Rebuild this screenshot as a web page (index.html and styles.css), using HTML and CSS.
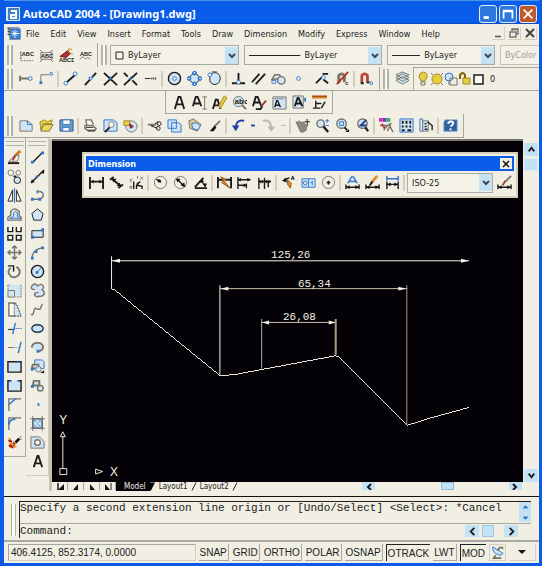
FILE: index.html
```html
<!DOCTYPE html>
<html lang="en">
<head>
<meta charset="utf-8">
<title>AutoCAD 2004 - [Drawing1.dwg]</title>
<link rel="stylesheet" href="styles.css">
</head>
<body>
<div class="window">
<header class="titlebar">
  <svg class="logo" viewBox="0 0 14 14"><rect width="14" height="14" fill="#dfe6ea"/><rect x="2" y="1" width="11" height="12" fill="#3f83c4"/><path d="M5 4h5v7H5V8h5" fill="none" stroke="#fff" stroke-width="2"/></svg>
  <h1>AutoCAD 2004 - [Drawing1.dwg]</h1>
  <div class="winbtns">
    <button aria-label="Minimize"><svg viewBox="0 0 16 16"><path d="M3 12h6" stroke="#fff" stroke-width="3"/></svg></button>
    <button aria-label="Maximize"><svg viewBox="0 0 16 16"><path d="M3 13V4h10v9M3 5h10" fill="none" stroke="#fff" stroke-width="2"/></svg></button>
    <button class="close" aria-label="Close"><svg viewBox="0 0 16 16"><path d="M3 3l10 10M13 3L3 13" stroke="#fff" stroke-width="2"/></svg></button>
  </div>
</header>

<nav class="menubar">
  <svg class="doc" viewBox="0 0 14 14"><path d="M0 0h12l2 2v12H2z" fill="#8a98a4"/><rect x="3" y="2" width="11" height="11" fill="#2f78d4"/><path d="M8 3v9M4 7h9M5 4l6 6M11 4l-6 6" stroke="#fff"/><path d="M0 2h3M0 5h3M0 8h3" stroke="#333"/></svg>
  <button>File</button><button>Edit</button><button>View</button><button>Insert</button><button>Format</button><button>Tools</button><button>Draw</button><button>Dimension</button><button>Modify</button><button>Express</button><button>Window</button><button>Help</button>
  <div class="docbtns">
    <button aria-label="Minimize drawing"><svg viewBox="0 0 10 10"><path d="M2 8.500h6" stroke="#555" stroke-width="1.500"/></svg></button>
    <button aria-label="Restore drawing"><svg viewBox="0 0 10 10"><path d="M3 3V1h6v5H7M1 4h6v5H1zM3 1.500h6" fill="none" stroke="#777" stroke-width="1.500"/></svg></button>
    <button aria-label="Close drawing"><svg viewBox="0 0 10 10"><path d="M1 1l8 8M9 1L1 9" stroke="#444" stroke-width="2"/></svg></button>
  </div>
</nav>

<div class="bar">
  <div class="group">
    <span class="grip"></span>
    <button aria-label="Arc aligned text"><svg viewBox="0 0 16 16"><text x="3" y="8" class="tiny">ABC</text><path d="M2 4v9" stroke-dasharray="2 1"/><path d="M2 13.500h13" class="g" stroke-dasharray="2 1"/></svg></button>
    <button aria-label="Text mask"><svg viewBox="0 0 16 16"><path d="M2 5h12v7H2zM1 2l3 3M15 2l-4 3M1 15l3-3M15 15l-3-3" class="g"/><text x="2" y="11" class="tiny">ABC</text></svg></button>
    <button aria-label="Explode text"><svg viewBox="0 0 16 16"><text x="0" y="15" class="tiny">ABCD</text><path d="M1 9l8-6 3 3-4 4z" class="r"/><path d="M9 3l5-2M11 5l4 2M10 2l1-2" stroke="#d08020"/></svg></button>
    <button aria-label="Enclose text"><svg viewBox="0 0 16 16"><text x="1" y="9" class="tiny">ABC</text><path d="M1 12l3-3 3 3 2-2 3 2" class="g"/></svg></button>
  </div>
  <span class="grip lead"></span>
  <div class="combos">
    <label class="combo"><svg viewBox="0 0 9 9"><path d="M1 1h7v7H1z" fill="none" stroke="#222"/></svg><select aria-label="Color"><option>ByLayer</option></select></label>
    <label class="combo wide"><svg class="rule" viewBox="0 0 30 9" preserveAspectRatio="none"><path d="M0 4.500h30" stroke="#222"/></svg><select aria-label="Linetype"><option>ByLayer</option></select></label>
    <label class="combo"><svg class="rule" viewBox="0 0 30 9" preserveAspectRatio="none"><path d="M0 4.500h30" stroke="#222"/></svg><select aria-label="Lineweight"><option>ByLayer</option></select></label>
    <label class="combo off"><select aria-label="Plot style" disabled><option>ByColor</option></select></label>
  </div>
</div>

<div class="bar ruled">
  <div class="group">
    <span class="grip"></span>
    <button aria-label="Temporary track point"><svg viewBox="0 0 16 16"><path d="M1 5v6M1 8h9" class="g" stroke-width="2"/><circle cx="12" cy="8" r="2" class="b"/></svg></button>
    <button aria-label="Snap from"><svg viewBox="0 0 16 16"><path d="M2 13V4h9" class="g"/><circle cx="13" cy="3" r="1.500" class="b"/><path d="M2 11v3" stroke-width="3" class="b"/></svg></button>
    <i class="sep"></i>
    <button aria-label="Endpoint"><svg viewBox="0 0 16 16"><path d="M4 12l9-8" stroke-width="2"/><circle cx="3" cy="13" r="2" class="b t"/><circle cx="13" cy="3" r="2" class="b t"/></svg></button>
    <button aria-label="Midpoint"><svg viewBox="0 0 16 16"><path d="M2 15L14 2" stroke-width="2"/><path d="M6 7l5-1-3 4z" class="b t"/></svg></button>
    <button aria-label="Intersection"><svg viewBox="0 0 16 16"><path d="M1 2l14 13M15 2L1 15" stroke-width="2"/><path d="M6 8h4M8 6v4" class="b"/></svg></button>
    <button aria-label="Apparent intersection"><svg viewBox="0 0 16 16"><path d="M1 2l4 4M10 10l5 5M15 2L1 15" stroke-width="2"/><path d="M6 8h4M8 6v4" class="b"/></svg></button>
    <button aria-label="Extension"><svg viewBox="0 0 16 16"><path d="M2 8h6"/><path d="M9 8h6" stroke-dasharray="1 1" stroke-width="2"/></svg></button>
    <i class="sep"></i>
    <button aria-label="Center"><svg viewBox="0 0 16 16"><circle cx="8" cy="8" r="6.500" class="p" stroke-width="1.500"/><circle cx="8" cy="8" r="2" class="b t"/></svg></button>
    <button aria-label="Quadrant"><svg viewBox="0 0 16 16"><circle cx="8" cy="8" r="5" class="p"/><path d="M8 0l2 2-2 2-2-2zM8 12l2 2-2 2-2-2zM0 8l2-2 2 2-2 2zM12 8l2-2 2 2-2 2z" class="b t" stroke-width="1.500"/></svg></button>
    <button aria-label="Tangent"><svg viewBox="0 0 16 16"><path d="M3 4c6-5 12-1 11 5-1 7-10 7-11 1z" class="p"/><circle cx="3" cy="4" r="2" class="b t"/><path d="M5 1l6-1" class="g"/></svg></button>
    <i class="sep"></i>
    <button aria-label="Perpendicular"><svg viewBox="0 0 16 16"><path d="M8 2v8M1 13h14" stroke-width="2"/><circle cx="8" cy="12" r="2" class="b t"/></svg></button>
    <button aria-label="Parallel"><svg viewBox="0 0 16 16"><path d="M1 12L9 3M5 14L15 3" stroke-width="2"/></svg></button>
    <button aria-label="Insert point"><svg viewBox="0 0 16 16"><path d="M1 9l3-5h5l3 4z" class="p g" stroke-width="1.500"/><circle cx="11" cy="10" r="4" class="p g" stroke-width="1.500"/><path d="M1 10h4v3H1z" class="b t"/></svg></button>
    <button aria-label="Node"><svg viewBox="0 0 16 16"><circle cx="8" cy="8" r="2" class="b t"/></svg></button>
    <i class="sep blank"></i>
    <button aria-label="Nearest"><svg viewBox="0 0 16 16"><path d="M1 13l7-7M9 9l5 4M8 3h6" stroke-width="2"/><circle cx="9" cy="7" r="2" class="b t"/></svg></button>
    <button aria-label="No snap"><svg viewBox="0 0 16 16"><path d="M4 13V5q3-4 6 0v7" stroke-width="3" class="g"/><path d="M14 1L2 14" stroke="#b3332a" stroke-width="2"/><text x="11" y="15" class="tiny">c</text></svg></button>
    <i class="sep"></i>
    <button aria-label="Object snap settings"><svg viewBox="0 0 16 16"><path d="M3 13V5q3-4 6 0v6" stroke="#b8473c" stroke-width="3"/><path d="M2 13h3M8 12h3" stroke-width="2"/><circle cx="13" cy="13" r="1.500" class="b"/></svg></button>
  </div>
  <span class="grip lead"></span>
  <button aria-label="Layer properties"><svg viewBox="0 0 16 16"><path d="M1 10l7 4 7-4-7-4zM1 7l7 4 7-4-7-4zM1 4l7 4 7-4-7-3z" class="g p"/></svg></button>
  <div class="layer">
    <svg viewBox="0 0 14 16"><path d="M7 1q5 1 4 5l-2 4H5L3 6q0-4 4-5z" class="y"/><path d="M5 11h4v3H5z" class="g"/></svg>
    <svg viewBox="0 0 14 16"><circle cx="7" cy="8" r="5" class="y"/><path d="M1 2l2 2M13 2l-2 2M1 14l2-2M13 14l-2-2" class="g"/></svg>
    <svg viewBox="0 0 14 16"><circle cx="5" cy="6" r="4" class="b p"/><path d="M6 7h7v7H6z" class="g"/><path d="M5 10v4" class="g"/></svg>
    <svg viewBox="0 0 14 16"><path d="M2 8V4q3-4 5 0v3" stroke="#806000" stroke-width="2"/><path d="M5 7h7v6H5z" class="y"/></svg>
    <svg viewBox="0 0 14 16"><path d="M2 4h9v9H2z" class="t" stroke-width="1.500"/></svg>
    <select aria-label="Layer"><option>0</option></select>
  </div>
</div>

<div class="bar textbar">
  <div class="group boxed">
    <button aria-label="Multiline text"><svg viewBox="0 0 16 16"><path d="M3 15L7 2h2l4 13M4 10h8" stroke-width="2"/></svg></button>
    <button aria-label="Single line text"><svg viewBox="0 0 16 16"><path d="M1 12L4 2h2l4 10M2 9h6" stroke-width="2"/><path d="M11 2h5M13.500 2v13M11 15h5" class="g"/></svg></button>
    <button aria-label="Edit text"><svg viewBox="0 0 16 16"><path d="M1 15L4 5h2l3 10M2 11h6" stroke-width="2"/><path d="M7 12l6-11 3 2-7 11z" class="y"/></svg></button>
    <button aria-label="Find and replace"><svg viewBox="0 0 16 16"><circle cx="7" cy="7" r="5.500" class="p g"/><text x="3" y="10" class="abc">ab</text><text x="13" y="10" class="abc">c</text><path d="M11 11l4 4" class="g" stroke-width="2"/></svg></button>
    <button aria-label="Text style"><svg viewBox="0 0 16 16"><path d="M1 12L4 2h2l4 10M2 8h6" stroke-width="2"/><path d="M15 6l-5 6" stroke="#a43a24" stroke-width="2"/><path d="M4 15h5l2-3" stroke-width="2"/></svg></button>
    <button aria-label="Scale text"><svg viewBox="0 0 16 16"><path d="M1 2h14v13H1z" class="p g"/><path d="M3 4h10" stroke-dasharray="1 1"/><path d="M3 13l2-7h1l3 7M3 11h5" stroke-width="1.500"/></svg></button>
    <button aria-label="Justify text"><svg viewBox="0 0 16 16"><path d="M1 1h11v13H1z" class="p g"/><path d="M3 12L6 3h1l4 9M4 9h6" stroke-width="2"/><path d="M14 3v4" class="b" stroke-width="2"/></svg></button>
    <button aria-label="Convert distance"><svg viewBox="0 0 16 16"><path d="M0 2h16" stroke="#b04a18" stroke-width="3"/><path d="M0 3h16" stroke="#e0b030" stroke-dasharray="2 1" stroke-width="2"/><path d="M4 6v8M1 14h8M4 9h6M10 14l4-7" stroke-width="1.500"/></svg></button>
  </div>
</div>

<div class="bar">
  <div class="group standard">
    <span class="grip"></span>
    <button aria-label="New"><svg viewBox="0 0 16 16"><path d="M1 3h8l5 4v7H1z" class="p g"/><path d="M9 3v4h5" class="b"/></svg></button>
    <button aria-label="Open"><svg viewBox="0 0 16 16"><path d="M1 4l5-2 3 2 5-2-1 4H5L2 13z" class="y"/><path d="M5 7h10l-4 7H2z" fill="#f0d850" class="g"/></svg></button>
    <button aria-label="Save"><svg viewBox="0 0 16 16"><path d="M1 2h14v12H1z" fill="#6f9cc8" stroke="#31588a"/><path d="M4 2h8v5H4zM4 10h7v4H4z" class="t b"/></svg></button>
    <i class="sep"></i>
    <button aria-label="Plot"><svg viewBox="0 0 16 16"><path d="M4 7L3 2h6l2 5M2 8h8l4 3-2 3H6l-4-3z" class="t g" stroke-width="1.500"/><path d="M3 10h8M5 13h8"/></svg></button>
    <button aria-label="Plot preview"><svg viewBox="0 0 16 16"><path d="M1 2h10l4 3v9H1z" class="p b"/><circle cx="9" cy="7" r="3" class="t g"/><path d="M7 10l-5 5" stroke-width="2"/></svg></button>
    <button aria-label="Publish"><svg viewBox="0 0 16 16"><circle cx="9" cy="9" r="6" class="p g"/><path d="M1 3h6v5H1z" class="y"/><path d="M7 6l4 3-3 2z" class="r"/></svg></button>
    <i class="sep"></i>
    <button aria-label="Cut"><svg viewBox="0 0 16 16"><path d="M1 7h9M5 9l7-5" class="g" stroke-width="2"/><circle cx="13" cy="6" r="2"/><circle cx="12" cy="11" r="2"/><path d="M4 8l7 3"/></svg></button>
    <button aria-label="Copy"><svg viewBox="0 0 16 16"><path d="M1 2h9v9H1zM5 5h7l3 2v8H5z" class="p b"/></svg></button>
    <button aria-label="Paste"><svg viewBox="0 0 16 16"><path d="M2 3l5-2 8 6-4 7-8-3z" fill="#d9c48a" class="g"/><path d="M5 6l5-1 4 4-3 4-5-2z" class="p b"/></svg></button>
    <button aria-label="Match properties"><svg viewBox="0 0 16 16"><path d="M14 3L8 9" class="g" stroke-width="2"/><path d="M8 8l-5 6h4l3-4z" class="f"/></svg></button>
    <i class="sep"></i>
    <button aria-label="Undo"><svg viewBox="0 0 16 16"><path d="M14 3Q5 1 5 12" stroke="#1c3fa8" stroke-width="2"/><path d="M1 8l4 6 4-6z" fill="#1c3fa8" stroke="none"/></svg></button>
    <button class="slim" aria-label="Undo list"><svg viewBox="0 0 8 16"><path d="M2 8h4" stroke="#1c3fa8" stroke-width="2"/></svg></button>
    <button aria-label="Redo"><svg viewBox="0 0 16 16"><path d="M2 3q9-2 9 9M8 9l3 4 3-4" class="s" stroke-width="2"/></svg></button>
    <button class="slim" aria-label="Redo list"><svg viewBox="0 0 8 16"><path d="M2 8h5" class="s"/></svg></button>
    <i class="sep"></i>
    <button aria-label="Pan"><svg viewBox="0 0 16 16"><path d="M1 4l3 1V3l3 2 2-1 3 4v5l-3 2H6z" fill="#8b8a80" class="g"/><path d="M13 1v8M10 4h6" stroke-width="1"/></svg></button>
    <button aria-label="Zoom realtime"><svg viewBox="0 0 16 16"><circle cx="6" cy="6" r="4" class="p g" stroke-width="1.500"/><path d="M9 9l5 6" stroke-width="2.500"/><path d="M11 3h4M13 1v4M11 8h4" class="b"/></svg></button>
    <button aria-label="Zoom window"><svg viewBox="0 0 16 16"><circle cx="7" cy="6" r="5" class="p g" stroke-width="1.500"/><path d="M5 4h4v4H5z" class="b"/><path d="M10 10l3 3" stroke-width="2"/><path d="M15 12v3h-4z" class="f"/></svg></button>
    <button aria-label="Zoom previous"><svg viewBox="0 0 16 16"><circle cx="8" cy="6" r="5" class="p g" stroke-width="1.500"/><path d="M12 2L6 8h6" stroke="#1c3f88" stroke-width="2"/><path d="M11 10l3 4" stroke-width="2.500"/></svg></button>
    <i class="sep"></i>
    <button aria-label="Properties"><svg viewBox="0 0 16 16"><path d="M0 2h4" stroke="#e02bc0" stroke-width="4"/><path d="M4 2h4" stroke="#6b3bd0" stroke-width="4"/><path d="M8 2h4" stroke="#31b050" stroke-width="4"/><path d="M1 8h8l-4 5M10 6l5 9M13 5l-4 9" stroke-width="1.500" class="g"/><path d="M3 6l3 5" stroke="#c03030" stroke-width="2"/></svg></button>
    <button aria-label="DesignCenter"><svg viewBox="0 0 16 16"><path d="M1 1h14v14H1z" class="p b"/><path d="M4 3v3M8 3v3M12 3v3M4 8v2M8 8v2M12 8v2M3 13h3M9 13h4" stroke-width="2"/></svg></button>
    <button aria-label="Tool palettes"><svg viewBox="0 0 16 16"><path d="M1 1h3v13H1z" class="b"/><path d="M4 3h6v11H4z" class="p g"/><path d="M9 4l5 4v5M6 6h2M6 9h2M6 12h3" stroke-width="1.500"/></svg></button>
    <i class="sep"></i>
    <button aria-label="Help"><svg viewBox="0 0 16 16"><path d="M2 2h13v12H1V5z" fill="#2f5f9c" stroke="#6f96c0"/><path d="M5 6q3-4 6-1 0 2-3 4M8 11v2" stroke="#fff" stroke-width="2"/></svg></button>
  </div>
</div>

<main class="work">
  <div class="side">
    <span class="hgrip"></span>
    <button aria-label="Erase"><svg viewBox="0 0 16 16"><path d="M14 1L8 7" stroke="#c8761c" stroke-width="3"/><path d="M8 6L2 12h9l2-6z" class="t g"/><path d="M9 6l-3 5" stroke="#b03020" stroke-width="2"/><path d="M1 14h12" stroke-width="2"/></svg></button>
    <button aria-label="Copy object"><svg viewBox="0 0 16 16"><circle cx="4" cy="4" r="3" class="g t"/><circle cx="12" cy="4" r="2.500" class="g t"/><circle cx="11" cy="12" r="3.500" class="p"/><path d="M7 8h3" stroke-width="2"/></svg></button>
    <button aria-label="Mirror"><svg viewBox="0 0 16 16"><path d="M6 2v12H1zM10 2v12h5z" class="t"/><path d="M8 0v16" class="b"/></svg></button>
    <button aria-label="Offset"><svg viewBox="0 0 16 16"><path d="M1 14v-3l3-2V5q4-6 9 0v4l2 2v3z" class="g" stroke-width="1.500"/><path d="M3 12l4-2V6q2-3 4 0v4l3 2z" class="b p"/></svg></button>
    <button aria-label="Array"><svg viewBox="0 0 16 16"><path d="M1 1v5h5V1M10 1v5h5V1M1 10h5v5H1zM10 10h5v5h-5z" class="t" stroke-width="1.500"/></svg></button>
    <button aria-label="Move"><svg viewBox="0 0 16 16"><path d="M8 1v14M1 8h14M5.500 3.500L8 1l2.500 2.500M5.500 12.500L8 15l2.500-2.500M3.500 5.500L1 8l2.500 2.500M12.500 5.500L15 8l-2.500 2.500" class="g" stroke-width="1.500"/></svg></button>
    <button aria-label="Rotate"><svg viewBox="0 0 16 16"><path d="M10 3q5 3 3 8-4 5-9 2-5-5 0-9" class="g" stroke-width="2"/><path d="M1 2h6v6" stroke-width="1.500"/></svg></button>
    <button aria-label="Scale"><svg viewBox="0 0 16 16"><path d="M1 2h14v13H1z" class="p" stroke="none"/><path d="M1 7V2h2M15 2v13H9" class="g" stroke-dasharray="2 1"/><path d="M1 8h7v7H1z" class="p g"/></svg></button>
    <button aria-label="Stretch"><svg viewBox="0 0 16 16"><path d="M2 1h6v14H2z" class="t g" stroke-width="1.500"/><path d="M8 2h2l5 13H8" class="p" stroke-dasharray="2 1"/></svg></button>
    <button aria-label="Trim"><svg viewBox="0 0 16 16"><path d="M1 9h7"/><path d="M9 2L6 14" class="b" stroke-width="1.500"/><path d="M9 8h7" class="b" stroke-dasharray="2 1"/></svg></button>
    <button aria-label="Extend"><svg viewBox="0 0 16 16"><path d="M1 8h7" class="g"/><path d="M8 8h4" class="s"/><path d="M15 2l-3 12" class="b" stroke-width="1.500"/></svg></button>
    <button aria-label="Break at point"><svg viewBox="0 0 16 16"><path d="M1 3h14v11H1z" class="p" stroke-width="1.500"/><path d="M11 3h2" class="b" stroke-width="2"/></svg></button>
    <button aria-label="Break"><svg viewBox="0 0 16 16"><path d="M4 3H1v11h14V3h-3" class="p" stroke-width="1.500"/><path d="M3 3h2M11 3h2" class="b" stroke-width="2"/></svg></button>
    <button aria-label="Chamfer"><svg viewBox="0 0 16 16"><path d="M2 15V2h13" class="g" stroke-width="1.500"/><path d="M2 8l7-6" class="b" stroke-width="1.500"/></svg></button>
    <button aria-label="Fillet"><svg viewBox="0 0 16 16"><path d="M2 15V2h13" class="g" stroke-width="1.500"/><path d="M2 9q0-5 7-6" class="b" stroke-width="2"/></svg></button>
    <button aria-label="Explode"><svg viewBox="0 0 16 16"><path d="M8 7l4-4 2 2-4 4z" class="f"/><path d="M13 4l2-3M14 5l2-1" class="g"/><path d="M2 5l3 3M8 8l-3 6M2 12l5-2" stroke="#b0281c" stroke-width="3"/><path d="M3 8l4 3M7 13l3-1M2 3l1 2" stroke="#f0a020" stroke-width="2"/></svg></button>
  </div>
  <div class="side draw">
    <span class="hgrip"></span>
    <button aria-label="Line"><svg viewBox="0 0 16 16"><path d="M3 13L13 3" stroke-width="1.500"/><path d="M1 13h3M12 3h3" class="b" stroke-width="3"/></svg></button>
    <button aria-label="Construction line"><svg viewBox="0 0 16 16"><path d="M1 15L15 1" stroke-width="1.500"/><path d="M15 1v4l-4-1zM1 15l1-4 3 3z" class="f"/><path d="M6 8h3" class="b" stroke-width="2"/></svg></button>
    <button aria-label="Polyline"><svg viewBox="0 0 16 16"><path d="M2 12h8q5-2 4-6-2-3-5-2" class="g" stroke-width="1.500"/><path d="M1 12h3M9 12h3M7 4h2" class="b" stroke-width="3"/></svg></button>
    <button aria-label="Polygon"><svg viewBox="0 0 16 16"><path d="M8 2l6 5-2 7H4L2 7z" class="p"/></svg></button>
    <button aria-label="Rectangle"><svg viewBox="0 0 16 16"><path d="M2 5h12v7H2z" class="p"/><path d="M1 12h3M12 4h3" class="b" stroke-width="3"/></svg></button>
    <button aria-label="Arc"><svg viewBox="0 0 16 16"><path d="M2 14Q3 4 14 3" class="g" stroke-width="1.500"/><path d="M1 14h3M5 7h3M12 3h3" class="b" stroke-width="3"/></svg></button>
    <button aria-label="Circle"><svg viewBox="0 0 16 16"><circle cx="8" cy="8" r="6.500" class="p" stroke-width="1.500"/><path d="M7 9l5-5" class="b"/><path d="M6 9h3" class="b" stroke-width="3"/></svg></button>
    <button aria-label="Revision cloud"><svg viewBox="0 0 16 16"><path d="M5 7Q0 7 2 3q3-4 6 0 4-3 6 0 1 3-1 4 3 2 2 5-2 3-5 2-3 2-5-1-1-3 4-3" class="p g" stroke-width="1.500"/></svg></button>
    <button aria-label="Spline"><svg viewBox="0 0 16 16"><path d="M1 13c4 3 2-8 6-6s4 1 6-5" class="g" stroke-width="1.500"/></svg></button>
    <button aria-label="Ellipse"><svg viewBox="0 0 16 16"><ellipse cx="8" cy="8" rx="6" ry="4" class="p" stroke-width="1.500"/><path d="M7 4h2M7 12h2M1 8h2M13 8h2" class="b" stroke-width="2"/></svg></button>
    <button aria-label="Ellipse arc"><svg viewBox="0 0 16 16"><path d="M2 8q0-5 6-5t6 5q-1 4-6 4" class="g p" stroke-width="2"/><path d="M7 12h3" class="b" stroke-width="3"/></svg></button>
    <button aria-label="Insert block"><svg viewBox="0 0 16 16"><path d="M5 1h8l2 2v7H5z" class="p b"/><path d="M3 6h6v4H2z" class="p g" stroke-width="2"/><circle cx="9" cy="11" r="3" class="p g"/><path d="M1 11h3" class="b" stroke-width="3"/><path d="M15 12v3h-4z" class="f"/></svg></button>
    <button aria-label="Make block"><svg viewBox="0 0 16 16"><path d="M4 3h6v5H3z" class="p g" stroke-width="2"/><circle cx="11" cy="11" r="3" class="p g" stroke-width="1.500"/><path d="M1 9h3" class="b" stroke-width="3"/></svg></button>
    <button aria-label="Point"><svg viewBox="0 0 16 16"><path d="M8 8h2" class="b" stroke-width="3"/></svg></button>
    <button aria-label="Hatch"><svg viewBox="0 0 16 16"><path d="M3 3h10v10H3z" class="p"/><path d="M3 0v16M13 0v16M0 3h16M0 13h16" class="g"/><path d="M3 8l5-5M3 13L13 3M8 13l5-5M3 8l5 5M3 3l10 10M8 3l5 5" class="b" stroke-dasharray="1 1"/></svg></button>
    <button aria-label="Region"><svg viewBox="0 0 16 16"><path d="M1 2h9l5 5v7H1z" class="p g"/><circle cx="8" cy="8" r="3" class="t g" stroke-width="1.500"/></svg></button>
    <button aria-label="Multiline text"><svg viewBox="0 0 16 16"><path d="M4 14L8 2h1l4 12M5 10h7" stroke-width="2"/></svg></button>
  </div>

  <div class="stage">
    <div class="canvas">
      <svg class="drawing" viewBox="52 141 471 343" fill="none" stroke="#e9e6d8">
        <g stroke="#f4f2e6">
          <path d="M110.500 257v33M110.500 261.500H470M219.500 286v90"/>
          <path d="M219.500 289.500H408M261.500 323.500H336" stroke="#c9c4b2"/>
        </g>
        <path d="M261.500 320v50" stroke="#aeaeac"/>
        <path d="M336 320v36" stroke="#a89c80" stroke-width="2"/>
        <path d="M407.500 286v140" stroke="#a39a86"/>
        <path d="M111 290l3 1L219 376.500M219 377l15-1L336 357l3 1 69 69 22-7 40-11" shape-rendering="crispEdges"/>
        <g fill="#f4f2e6" stroke="none">
          <path d="M111 261.500l8-2v4zM470 261.500l-8-2v4zM220 289.500l8-2v4zM407 289.500l-8-2v4zM262 323.500l7-2v4zM336 323.500l-7-2v4z"/>
          <text x="271" y="259">125,26</text><text x="298" y="288">65,34</text><text x="283" y="321">26,08</text>
          <text x="58" y="426" class="axis">Y</text><text x="109" y="478" class="axis">X</text>
        </g>
        <path d="M61.500 470v-32M58.500 470.500h7v6h-7zM59 438.500l2.500-5 2.500 5zM94.500 471v5l7-2.500z"/>
      </svg>
      <section class="palette">
        <header><h2>Dimension</h2><button class="x" aria-label="Close"><svg viewBox="0 0 10 10"><path d="M2 2l6 6M8 2L2 8" stroke="#111" stroke-width="1.500"/></svg></button></header>
        <div class="tools">
          <button aria-label="Linear"><svg viewBox="0 0 16 16"><path d="M1 2v13M15 2v13M2 7h12" stroke-width="2"/><path d="M2 7l3-2v4zM14 7l-3-2v4z" class="f"/></svg></button>
          <button aria-label="Aligned"><svg viewBox="0 0 16 16"><path d="M1 5l4-3M10 14l5-4M3 4l10 8" stroke-width="2"/><path d="M3 4l5 0-3 4zM13 12l-5 0 3-4z" class="f"/></svg></button>
          <button aria-label="Ordinate"><svg viewBox="0 0 16 16"><path d="M5 7v8M8 15v-4l4-4M9 8v3l5 1v3" stroke-width="1.500"/><path d="M1 4l1 2 2-2M2 6v2M9 1v3M12 2l3 3M15 2l-3 3M1 12h2v2H1z" class="g"/></svg></button>
          <i class="sep"></i>
          <button aria-label="Radius"><svg viewBox="0 0 16 16"><circle cx="8" cy="8" r="6.500" class="g"/><path d="M3 4l5 1 1 3-3 0z" class="f"/></svg></button>
          <button aria-label="Diameter"><svg viewBox="0 0 16 16"><circle cx="8" cy="8" r="6.500" class="g"/><path d="M4 4l8 8" stroke-width="1.500"/><path d="M3 4l5 0-3 4zM13 13l-1-5-4 3z" class="f"/></svg></button>
          <button aria-label="Angular"><svg viewBox="0 0 16 16"><path d="M2 14h13M2 13L11 3" stroke-width="2"/><path d="M7 7q5 0 6 6" /><path d="M6 7l5-2v4zM13 13l-3-4h5z" class="f"/></svg></button>
          <i class="sep"></i>
          <button aria-label="Quick dimension"><svg viewBox="0 0 16 16"><path d="M1 2v12M15 2v12M1 5h14" stroke-width="2"/><path d="M4 2l6 3-2 2 6 7-9-6 2-2z" fill="#e88a28" stroke="#8c5010"/></svg></button>
          <button aria-label="Baseline"><svg viewBox="0 0 16 16"><path d="M1 2v13M1 5h13M1 11h9M10 9v5" stroke-width="1.500"/><path d="M15 5l-4-2v4zM10 11L7 9v4zM1 5l3-2v4z" class="f"/></svg></button>
          <button aria-label="Continue"><svg viewBox="0 0 16 16"><path d="M2 3v12M8 3v12M1 7h14M12 7v6" stroke-width="1.500"/><path d="M8 7L5 5v4zM8 7l3-2v4zM2 7l2-2v4zM15 7l-3-2v4z" class="f"/></svg></button>
          <i class="sep"></i>
          <button aria-label="Quick leader"><svg viewBox="0 0 16 16"><path d="M3 5l6-2" stroke-width="1.500"/><path d="M1 6l5-3v5z" class="f"/><path d="M11 5l1.500-4L14 5M11 4h3"/><path d="M7 5l4 4-1 5-3-4z" fill="#e88a28" stroke="#8c5010"/></svg></button>
          <button aria-label="Tolerance"><svg viewBox="0 0 16 16"><path d="M1 4h14v9H1zM8 4v9" class="b p"/><circle cx="4.500" cy="8.500" r="2" class="b"/><path d="M12 6v5M10 8h2" class="b"/></svg></button>
          <button aria-label="Center mark"><svg viewBox="0 0 16 16"><circle cx="8" cy="8" r="6.500" class="g"/><path d="M8 6v4M6 8h4" stroke-width="1.500"/></svg></button>
          <i class="sep"></i>
          <button aria-label="Dimension edit"><svg viewBox="0 0 16 16"><path d="M3 9l4-7h2l4 7M5 7h6" class="b" stroke-width="1.500"/><path d="M1 10v5M15 10v5M1 13h14" stroke-width="1.500"/><path d="M1 13l4-2v4zM15 13l-4-2v4z" class="f"/></svg></button>
          <button aria-label="Dimension text edit"><svg viewBox="0 0 16 16"><path d="M13 1L7 8" stroke="#e09030" stroke-width="3"/><path d="M8 7l-3 4" stroke-width="2"/><path d="M1 10v5M15 10v5M1 13h14" stroke-width="1.500"/><path d="M1 13l4-2v4zM15 13l-4-2v4z" class="f"/></svg></button>
          <button aria-label="Dimension update"><svg viewBox="0 0 16 16"><path d="M2 4h13M2 1v5M14 1v5" class="b" stroke-width="1.500"/><path d="M2 7v8M14 7v8M2 10h12" stroke-width="1.500"/><path d="M2 10l4-2v4zM14 10l-4-2v4z" class="f"/></svg></button>
          <i class="sep"></i>
          <label class="combo style"><select aria-label="Dimension style"><option>ISO-25</option></select></label>
          <button aria-label="Dimension style manager"><svg viewBox="0 0 16 16"><path d="M15 1L9 7" stroke="#777" stroke-width="2"/><path d="M9 6l-3 5" stroke="#a43a24" stroke-width="2"/><path d="M1 10v5M15 10v5M1 13h14" stroke-width="1.500"/><path d="M1 13l4-2v4zM15 13l-4-2v4z" class="f"/></svg></button>
        </div>
      </section>
    </div>
    <div class="tabs">
      <button aria-label="First"><svg viewBox="0 0 12 7"><path d="M4 0v7" stroke-width="1.500"/><path d="M10 1v6H4z" class="f"/></svg></button>
      <button aria-label="Previous"><svg viewBox="0 0 12 7"><path d="M8 1v6H3z" class="f"/></svg></button>
      <button aria-label="Next"><svg viewBox="0 0 12 7"><path d="M4 1v6h5z" class="f"/></svg></button>
      <button aria-label="Last"><svg viewBox="0 0 12 7"><path d="M3 1v6h5z" class="f"/><path d="M9 0v7"/></svg></button>
      <button class="tab on">Model</button>
      <svg class="slant" viewBox="0 0 6 8"><path d="M0 0h5L1 8H0z" fill="#040206"/></svg>
      <button class="tab">Layout1</button>
      <svg class="slant" viewBox="0 0 6 8"><path d="M5 0L1 8" stroke="#222"/></svg>
      <button class="tab">Layout2</button>
      <svg class="slant" viewBox="0 0 6 8"><path d="M5 0L1 8" stroke="#222"/></svg>
      <div class="hscroll"><button aria-label="Scroll left"><svg viewBox="0 0 12 7"><path d="M8 1L5 4l3 3" stroke-width="2"/></svg></button><span class="thumb"></span><button aria-label="Scroll right"><svg viewBox="0 0 12 7"><path d="M4 1l3 3-3 3" stroke-width="2"/></svg></button></div>
    </div>
  </div>
  <div class="vscroll">
    <button aria-label="Scroll up"><svg viewBox="0 0 12 12"><path d="M3 8l3-4 3 4" stroke-width="2"/></svg></button>
    <span class="thumb"></span>
    <button class="end" aria-label="Scroll down"><svg viewBox="0 0 12 12"><path d="M3 4l3 4 3-4" stroke-width="2"/></svg></button>
  </div>
</main>

<section class="command">
  <span class="grip"></span>
  <div class="lines">
    <div class="history"><p>Specify a second extension line origin or [Undo/Select] &lt;Select&gt;: *Cancel</p>
      <div class="mini"><button aria-label="Scroll history up"><svg viewBox="0 0 12 12"><path d="M4 7l2-2 2 2" class="b" stroke-width="2"/></svg></button><button aria-label="Scroll history down"><svg viewBox="0 0 12 12"><path d="M4 5l2 2 2-2" class="b" stroke-width="2"/></svg></button></div>
    </div>
    <div class="prompt"><label for="cmd">Command:</label><input id="cmd" type="text">
      <div class="mini row"><button aria-label="Scroll left"><svg viewBox="0 0 12 12"><path d="M8 2L4 6l4 4" stroke-width="2"/></svg></button><span class="thumb"></span><button aria-label="Scroll right"><svg viewBox="0 0 12 12"><path d="M4 2l4 4-4 4" stroke-width="2"/></svg></button></div>
    </div>
  </div>
</section>

<footer class="status">
  <output>406.4125, 852.3174, 0.0000</output>
  <button>SNAP</button><button>GRID</button><button>ORTHO</button><button>POLAR</button><button>OSNAP</button><button class="on">OTRACK</button><button>LWT</button><button class="on">MOD</button>
  <div class="tray"><button aria-label="Communication center"><svg viewBox="0 0 16 16"><path d="M3 2q-1 7 8 9l3-2z" class="p b"/><path d="M8 6l3-4M12 2l2 2M6 11l-2 3h8" class="g" stroke-width="2"/></svg></button></div>
  <button class="more" aria-label="Status bar menu"><svg viewBox="0 0 8 8"><path d="M0 2h8L4 6z" class="f"/></svg></button>
</footer>
</div>
</body>
</html>
```

FILE: styles.css
```css
* { box-sizing: border-box; }
body { margin: 0; font: 9px/12px "DejaVu Sans Condensed", "DejaVu Sans", sans-serif; color: #222; }
button { padding: 0; border: 0; background: none; font: inherit; color: inherit; flex: none; display: flex; align-items: center; justify-content: center; }
select, input { font: inherit; color: inherit; border: 0; padding: 0; background: none; appearance: none; min-width: 0; outline: 0; }
select:disabled { opacity: 1; }
h1, h2, p { margin: 0; font-weight: normal; }
svg { display: block; flex: none; }

.window { height: 100vh; display: flex; flex-direction: column; background: #f1efe4; border: solid #0b5be8; border-width: 0 3px 3px 4px; }

.titlebar { display: flex; align-items: center; height: 24px; flex: none; gap: 3px; padding: 3px 0 0 2px; background: #0a5de8; border-top: 1px solid #4a95e8; border-bottom: 1px solid #0a48c4; color: #fff; }
.logo { width: 14px; height: 14px; }
h1 { flex: 1; font: bold 11px/16px "Noto Sans", sans-serif; white-space: nowrap; }
.winbtns { display: flex; gap: 2px; padding-right: 2px; }
.winbtns button { width: 18px; height: 18px; border: 1px solid #e3ebf5; border-radius: 3px; background: #2c78dc; }
.winbtns .close { background: #c05a2c; }
.winbtns svg { width: 14px; height: 14px; }

.menubar { display: flex; align-items: center; height: 19px; flex: none; gap: 11px; padding-left: 3px; }
.doc { width: 14px; height: 13px; margin-right: -6px; }
.docbtns { display: flex; margin-left: auto; gap: 3px; padding-right: 2px; }
.docbtns button { width: 13px; height: 13px; border-right: 1px solid #d6cfba; border-bottom: 1px solid #d6cfba; }
.docbtns svg { width: 10px; height: 10px; }

.bar { display: flex; align-items: center; height: 24px; flex: none; }
.bar button, .tools button { width: 20px; height: 20px; }
.bar button.slim { width: 10px; }
.bar .slim svg { width: 8px; }
.bar svg, .side svg, .tools svg, .tray svg { width: 15px; height: 15px; }
button svg, .layer svg { fill: none; stroke: #1c1c1c; }
.group { display: flex; align-items: center; align-self: stretch; border-right: 1px solid #a5a7a0; padding-right: 1px; }
.ruled { border-bottom: 1px solid #a5a7a0; }
.ruled .group { padding-right: 3px; }
.textbar { padding-left: 161px; height: 23px; }
.boxed { border: solid #a5a7a0; border-width: 0 1px 1px; padding: 0 3px; }
.standard { border-bottom: 1px solid #a5a7a0; padding-right: 3px; }
.grip { width: 6px; height: 20px; margin: 0 3px; flex: none; border: solid #b3b3aa; border-width: 0 2px; background: #fbfaf4; }
.sep { width: 2px; height: 16px; margin: 0 1px; background: #d3cdbc; }
.sep.blank { background: none; }

.g { stroke: #77746a; }
.b { stroke: #2f74d0; }
.s { stroke: #b9b8ae; }
.p { fill: #cfe4f4; }
.t { fill: #fbfaf2; }
.y { fill: #e6cf3c; stroke: #a08a28; }
.r { fill: #b3332a; stroke: #702018; }
.f { fill: #111; stroke: none; }
.tiny { font: bold 6px "Liberation Sans", sans-serif; fill: #222; stroke: none; }
.abc { font: bold 8px "Liberation Sans", sans-serif; fill: #222; stroke: none; }

.combos { flex: 1; display: grid; grid-template-columns: 129fr 137fr 108fr 39fr; gap: 5px; min-width: 0; }
.combo { display: flex; align-items: center; gap: 4px; height: 20px; padding-left: 4px; border: 1px solid #a9aba6; background: #f4f2e8; min-width: 0; overflow: hidden; }
.combo select { flex: 1; height: 18px; background: url("data:image/svg+xml,%3Csvg xmlns='http://www.w3.org/2000/svg' width='13' height='17'%3E%3Cpath d='M0 0h13v17H0z' fill='%23c3e3f5'/%3E%3Cpath d='M4 7l3 3 3-3' fill='none' stroke='%23445' stroke-width='2'/%3E%3C/svg%3E") no-repeat right center; }
.combo svg { width: 9px; height: 9px; }
.combo svg.rule { width: auto; flex: 0 1 28%; }
.combo.wide svg.rule { flex-basis: 39%; }
.combo.off { border-right: 0; border-color: #c9c2ae; color: #a09d92; }
.combo.off select { background: none; }
.layer { flex: 1; display: flex; align-items: center; align-self: stretch; margin-left: 1px; padding-left: 2px; border: solid #a5a7a0; border-width: 1px 0 0 1px; }
.bar .layer svg { width: 14px; height: 16px; }
.layer select { flex: 1; padding-left: 4px; }

.work { flex: 1; display: flex; min-height: 0; }
.side { width: 22px; align-self: flex-start; display: flex; flex-direction: column; align-items: center; padding-bottom: 4px; border: solid #a5a7a0; border-width: 0 1px 1px 0; }
.side.draw { width: 23px; border-color: #c9cfd0; }
.side button { width: 20px; height: 19px; }
.hgrip { width: 18px; height: 5px; margin: 3px 0 2px; border: solid #b3b3aa; border-width: 1px 0; }
.stage { flex: 1; display: flex; flex-direction: column; min-width: 0; margin-top: 1px; border-left: 3px solid #cbc3ae; }
.canvas { flex: 1; position: relative; min-height: 0; background: #040206; border-top: 2px solid #77756e; }
.drawing { width: 100%; height: 100%; }
.drawing text { font: 11px "Liberation Mono", monospace; }
.drawing .axis { font: 12px "Liberation Sans", sans-serif; }

.palette { position: absolute; left: 30px; right: 5px; top: 11px; padding: 2px; background: #f1efe4; border: 2px solid #d6cfba; }
.palette header { display: flex; align-items: center; justify-content: space-between; height: 15px; padding: 0 2px; background: #0a5de8; color: #fff; }
h2 { font: bold 9px/14px "DejaVu Sans Condensed", "DejaVu Sans", sans-serif; }
.x { width: 12px; height: 11px; background: #f1efe4; }
.x svg { width: 10px; height: 10px; }
.tools { display: flex; align-items: center; height: 23px; }
.combo.style { flex: 1; margin: 0 1px; }

.tabs { display: flex; height: 9px; margin-right: 1px; align-items: flex-start; background: #f1efe4; }
.tabs button { width: 16px; height: 8px; border-right: 1px solid #a5a7a0; }
.tabs svg { width: 12px; height: 7px; }
.tabs .tab { width: auto; height: 9px; padding: 0 3px; font: 8px/9px "DejaVu Sans Condensed", "DejaVu Sans", sans-serif; border: 0; }
.tabs .tab.on { padding: 0 4px 0 8px; background: #040206; color: #f1efe4; }
.tabs .slant { width: 6px; height: 9px; }
.hscroll { flex: 0 0 34%; display: flex; justify-content: space-between; margin-left: auto; }
.hscroll button { border: 0; width: 13px; background: #c3e3f5; }
.hscroll .thumb { width: 13px; height: 8px; margin-left: 10px; background: #c3e3f5; border: 1px solid #93bdd8; }

.vscroll { width: 16px; display: flex; flex-direction: column; gap: 2px; padding: 5px 1px 9px; }
.vscroll button { width: 14px; height: 13px; background: #c3e3f5; }
.vscroll svg, .mini svg { width: 11px; height: 11px; }
.vscroll .thumb { height: 13px; background: #c3e3f5; border: 1px solid #dcedf5; }
.vscroll .end { margin-top: auto; }

.command { display: flex; flex: none; margin-top: 5px; padding: 4px 8px 2px 4px; border-top: 1px solid #111; border-bottom: 2px solid #a9a9a5; font: 11px/13px "Liberation Mono", monospace; }
.command .grip { height: 32px; align-self: center; width: 5px; margin: 0 3px; border-width: 0 1px; }
.lines { flex: 1; min-width: 0; border: solid #222; border-width: 1px 0 0 1px; }
.history { display: flex; height: 22px; border-bottom: 1px solid #a5a7a0; }
.history p { flex: 1; white-space: nowrap; overflow: hidden; }
.prompt { display: flex; align-items: center; height: 14px; }
.prompt input { flex: 1; }
.mini { display: flex; flex-direction: column; }
.mini.row { flex-direction: row; gap: 3px; margin-right: 13px; }
.mini button, .mini .thumb { width: 12px; height: 10px; background: #c3e3f5; }
.mini .thumb { border: 1px solid #9cc6de; }
.mini.row button { width: 14px; height: 12px; }
.mini.row .thumb { height: 12px; margin-right: 7px; }

.status { display: flex; align-items: center; flex: none; gap: 3px; height: 21px; padding: 1px 3px 1px 4px; font: 10px/15px "Liberation Sans", sans-serif; white-space: nowrap; }
.status output { flex: 1; padding-left: 2px; border: 1px solid #d6cfba; border-top-color: #a5a7a0; border-left-color: #a5a7a0; }
.status button { height: 17px; padding: 0 1px; border: solid #a9a9a0; border-width: 0 1px 1px 0; }
.status button.on { border: solid #222; border-width: 1px 0 0 1px; }
.status .tray { border: 1px solid #d6cfba; }
.status .tray button { padding: 0; border: 0; height: 15px; }
.status .more { width: 27px; border-color: #d6cfba; }
.more svg { width: 8px; height: 8px; }
```
